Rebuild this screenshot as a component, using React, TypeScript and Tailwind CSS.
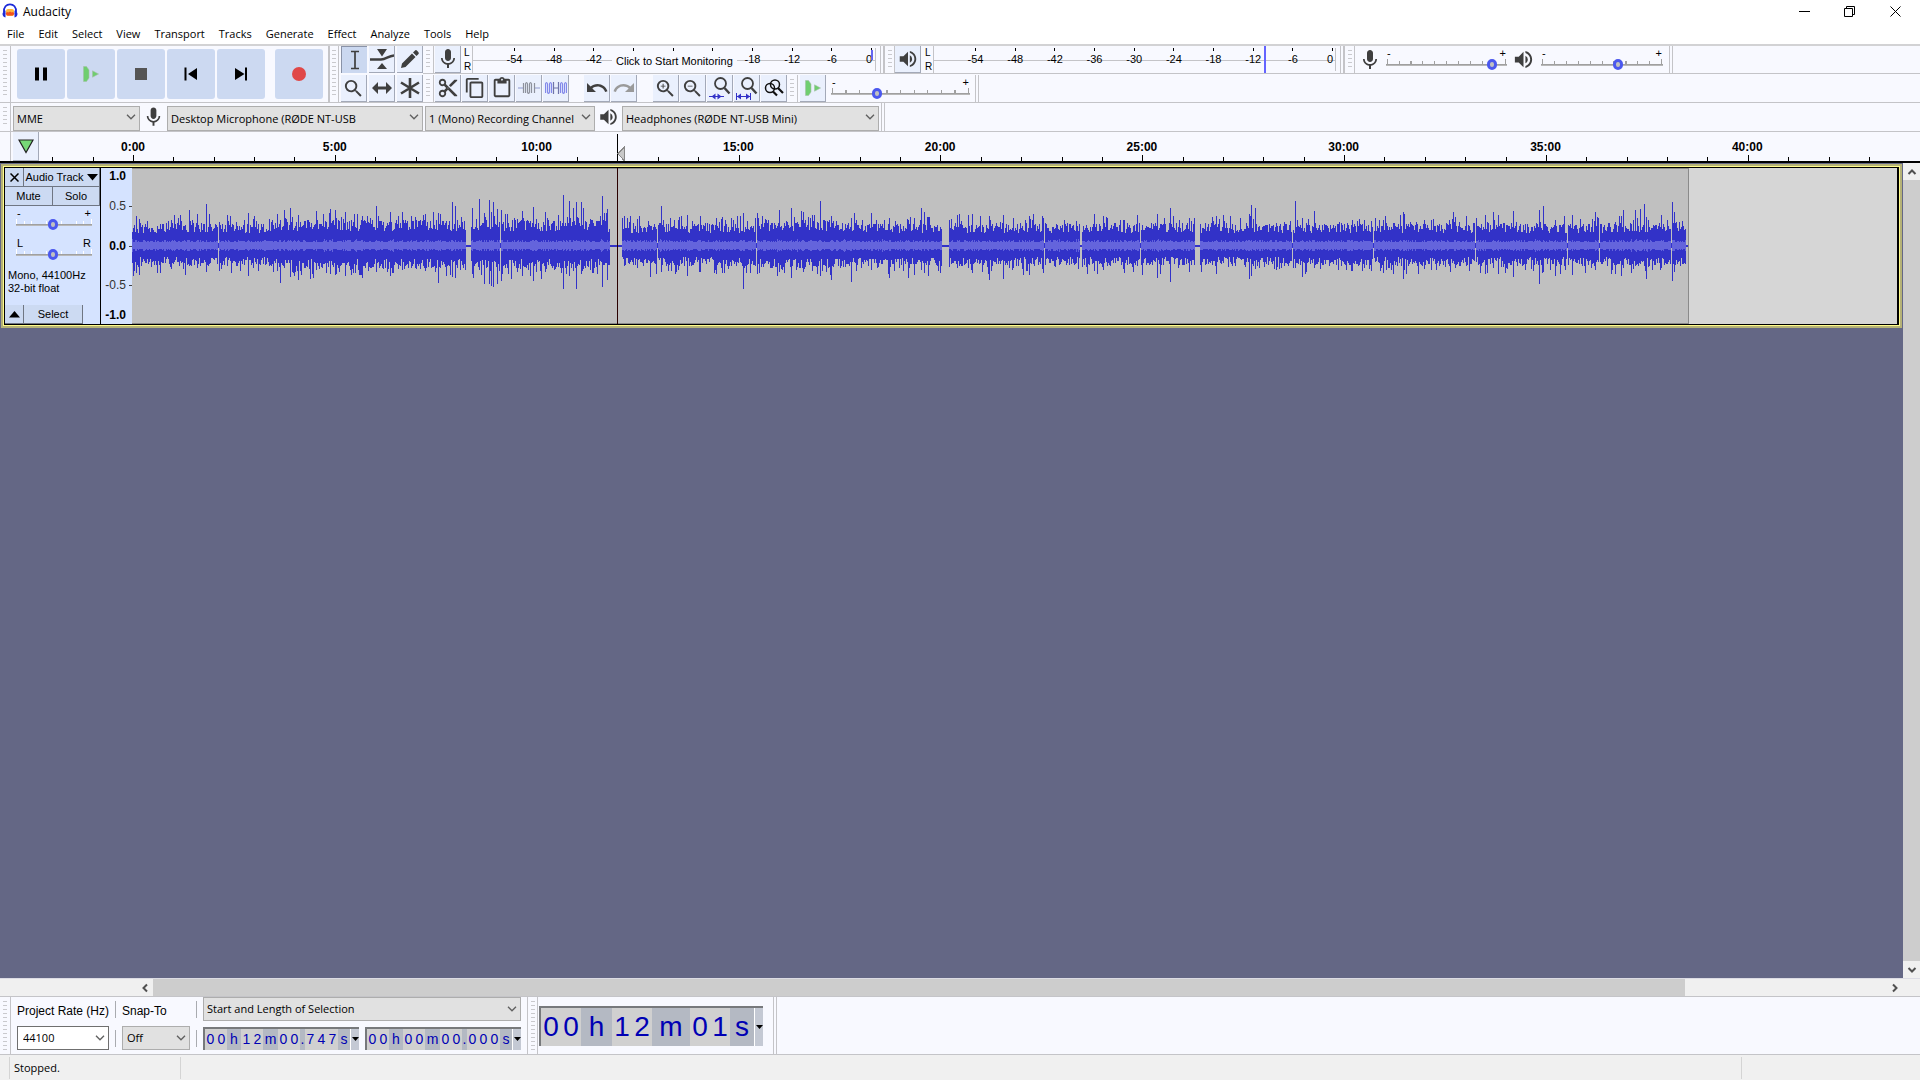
import { useState } from "react";
import type { ReactNode } from "react";
import { MdContentCopy, MdContentCut, MdContentPaste, MdMic, MdRedo, MdSearch, MdUndo, MdVolumeUp, MdZoomIn, MdZoomOut } from "react-icons/md";

const MENUS = ["File", "Edit", "Select", "View", "Transport", "Tracks", "Generate", "Effect", "Analyze", "Tools", "Help"];
const TIMES = ["0:00", "5:00", "10:00", "15:00", "20:00", "25:00", "30:00", "35:00", "40:00"];
const LEVELS = ["-54", "-48", "-42", "-36", "-30", "-24", "-18", "-12", "-6", "0"];
const MONITOR_HIDDEN = ["-36", "-30", "-24"];

// ---- Waveform ----

const CLIP_START = 132;
const CLIP_WIDTH = 1556;
const CENTRE = 77;
const SILENCES = [[466, 470], [610, 621], [942, 948], [1080, 1081], [1195, 1199], [1686, 1688]];
const NOTCHES = [218, 500, 657, 756, 1044, 1140, 1292, 1373, 1475, 1567, 1599, 1671];
// x, height above the centre line, height below it
const PEAKS = [
    [136, 30, 27], [174, 31, 16], [189, 36, 20], [197, 32, 22], [206, 42, 26], [219, 24, 25], [248, 33, 30], [280, 26, 37], [284, 36, 22], [290, 38, 31], [298, 31, 34], [316, 35, 24], [330, 37, 28],
    [345, 34, 30], [362, 30, 32], [376, 40, 26], [390, 34, 30], [402, 34, 24], [411, 30, 22], [425, 32, 25], [438, 33, 37], [452, 44, 31], [455, 40, 32], [472, 38, 28], [479, 47, 24], [484, 33, 38], [489, 46, 38], [491, 34, 40], [493, 44, 41], [497, 37, 38],
    [501, 36, 35], [507, 32, 22], [522, 35, 30], [533, 39, 35], [545, 34, 26], [563, 51, 43], [569, 45, 30], [573, 38, 25], [576, 44, 43], [581, 44, 28], [583, 38, 23], [602, 50, 41], [607, 37, 34],
    [624, 30, 20], [630, 30, 16], [637, 27, 22], [650, 20, 31], [661, 40, 26], [687, 31, 30], [700, 30, 26], [716, 28, 28], [743, 33, 43], [757, 33, 28], [779, 36, 26], [791, 38, 32], [803, 34, 26], [820, 45, 30], [831, 30, 34], [851, 28, 36], [871, 33, 24], [889, 28, 32],
    [908, 26, 32], [921, 38, 24], [924, 34, 27], [928, 29, 30], [957, 31, 22], [959, 32, 20], [972, 32, 27], [989, 30, 34], [1003, 31, 33], [1013, 28, 22], [1029, 30, 29], [1094, 32, 25], [1107, 28, 20], [1124, 26, 27], [1137, 31, 20], [1157, 32, 32], [1170, 38, 36], [1189, 28, 26],
    [1216, 30, 28], [1249, 32, 33], [1251, 41, 30], [1255, 38, 23], [1295, 45, 22], [1302, 28, 31], [1314, 35, 22], [1352, 26, 25], [1383, 26, 27], [1403, 34, 33], [1404, 32, 24], [1406, 22, 28], [1431, 26, 24], [1455, 29, 22], [1466, 30, 20], [1485, 31, 28], [1493, 34, 22], [1498, 31, 28],
    [1513, 35, 31], [1539, 36, 38], [1543, 40, 26], [1555, 26, 30], [1572, 31, 29], [1595, 34, 24], [1615, 24, 28], [1621, 30, 30], [1623, 36, 22], [1635, 36, 20], [1640, 37, 18], [1644, 42, 20], [1646, 29, 33], [1661, 31, 22], [1672, 44, 35], [1674, 34, 26],
];

function buildWave() {
    let seed = 7919;
    const rand = () => {
        seed = (seed * 16807) % 2147483647;
        return seed / 2147483647;
    };
    let peak = "";
    let rms = "";
    for (let i = 0; i < CLIP_WIDTH; i++) {
        const x = CLIP_START + i;
        const loud = (x > 270 && x < 608) || (x > 760 && x < 850) ? 1.15 : 1;
        let up = (13 + rand() * 10) * loud;
        let down = (11 + rand() * 9) * loud;
        if (rand() > 0.8) up += 3 + rand() * 8;
        if (rand() > 0.8) down += 3 + rand() * 8;
        let inner = 4 + Math.round(rand() * rand() * 3);
        const spike = PEAKS.find((p) => p[0] === x);
        if (spike) {
            up = spike[1];
            down = spike[2];
            inner = 6;
        }
        if (NOTCHES.includes(x)) {
            up = 3;
            down = 2;
            inner = 0;
        }
        if (SILENCES.some((s) => x >= s[0] && x <= s[1])) {
            up = 1;
            down = 1;
            inner = 0;
        }
        peak += `M${i} ${CENTRE - Math.round(up)}h1V${CENTRE + Math.round(down)}h-1z`;
        if (inner > 0) rms += `M${i} ${CENTRE - inner}h1V${CENTRE + inner - 1}h-1z`;
    }
    return { peak, rms };
}

const WAVE = buildWave();

// ---- Small pieces ----

function Grip({ className = "" }: { className?: string }) {
    return (
        <div className={`flex w-[11px] shrink-0 items-center justify-center self-stretch border-r border-[#c4c4c8] py-1 ${className}`}>
            <div className="h-full w-1 bg-[repeating-linear-gradient(to_bottom,#c9c9cd_0px,#c9c9cd_1px,transparent_1px,transparent_4px)]" />
        </div>
    );
}

function ToolButton({ label, pressed = false, className = "", children }: { label: string; pressed?: boolean; className?: string; children: ReactNode }) {
    const look = pressed ? "border-t border-l border-[#8a93a8] bg-[#cbd8f0]" : "border-r border-b border-[#a3a9b8] bg-[#eaf0fd]";
    return (
        <button aria-label={label} className={`flex h-[27px] w-[26px] shrink-0 items-center justify-center text-[#3f3f3f] ${look} ${className}`}>
            {children}
        </button>
    );
}

function Chevron({ className = "" }: { className?: string }) {
    return (
        <svg viewBox="0 0 10 6" className={`h-[6px] w-[10px] ${className}`} fill="none" stroke="#5f5f5f" strokeWidth="1.3">
            <path d="M1 .8 5 4.8 9 .8" />
        </svg>
    );
}

function Select({ label, value, className }: { label: string; value: string; className: string }) {
    return (
        <div className={`relative shrink-0 ${className}`}>
            <select aria-label={label} className="h-full w-full appearance-none border border-[#adadad] bg-[#e1e1e1] pr-4 pl-[3px] text-[11px] text-black outline-none">
                <option>{value}</option>
            </select>
            <Chevron className="pointer-events-none absolute top-[9px] right-1" />
        </div>
    );
}

function Slider({ label, start, low = "-", high = "+", className, white = false }: { label: string; start: number; low?: string; high?: string; className: string; white?: boolean }) {
    const [value, setValue] = useState(start);
    return (
        <div className={`shrink-0 ${className}`}>
            <div className="flex h-[9px] justify-between px-px font-['Liberation_Sans',sans-serif] text-[11px] leading-[9px] text-black">
                <span>{low}</span>
                <span>{high}</span>
            </div>
            <div className="grid h-[12px] items-center">
                <svg viewBox="0 0 100 12" preserveAspectRatio="none" className="col-start-1 row-start-1 h-[12px] w-full" shapeRendering="crispEdges">
                    {Array.from({ length: 11 }, (_, i) => (
                        <rect key={i} x={0.6 + i * 9.8} y={i % 10 === 0 ? 1 : 3} width="0.9" height={i % 10 === 0 ? 5 : 3} fill={white ? "#ffffff" : "#a0a0a0"} />
                    ))}
                    <rect y="6" width="100" height="1" fill="#a0a0a0" />
                    <rect y="7" width="100" height="1" fill="#b8b8b8" />
                </svg>
                <input
                    type="range"
                    aria-label={label}
                    min={0}
                    max={100}
                    value={value}
                    onChange={(e) => setValue(parseInt(e.target.value))}
                    className="col-start-1 row-start-1 m-0 h-[12px] w-full appearance-none bg-transparent [&::-webkit-slider-thumb]:h-[11px] [&::-webkit-slider-thumb]:w-[10px] [&::-webkit-slider-thumb]:appearance-none [&::-webkit-slider-thumb]:rounded-full [&::-webkit-slider-thumb]:border-[3px] [&::-webkit-slider-thumb]:border-[#4b58ee] [&::-webkit-slider-thumb]:bg-[#c0c0c0]"
                />
            </div>
        </div>
    );
}

function Meter({ className, mark, monitor = false }: { className: string; mark?: boolean; monitor?: boolean }) {
    return (
        <div className={`relative flex h-[27px] shrink-0 border-l border-[#c4c4c8] bg-[linear-gradient(#c4c4c8,#c4c4c8)] bg-[length:100%_1px] bg-[position:0_14px] bg-no-repeat pl-[41px] ${className}`}>
            <div className="flex w-[357px]">
                {LEVELS.map((level) => (
                    <div key={level} className={level === "0" ? "w-0" : "flex-1"}>
                        <div className={`flex w-px flex-col ${level === "0" ? "items-end" : "items-center"}`}>
                            <div className="mt-[2px] h-[3px] w-px bg-black" />
                            {!(monitor && MONITOR_HIDDEN.includes(level)) && (
                                <span className="mt-[2px] font-['Liberation_Sans',sans-serif] text-[11px] leading-3 text-black">{level}</span>
                            )}
                        </div>
                    </div>
                ))}
            </div>
            {monitor && (
                <div className="absolute top-[5px] left-[139px] bg-[#f8f9ff] px-1 py-[2px] font-['Liberation_Sans',sans-serif] text-[11px] leading-4 whitespace-nowrap text-black">Click to Start Monitoring</div>
            )}
            {monitor && <div className="absolute top-1 right-[3px] h-[10px] w-[2px] bg-[#6464f0]" />}
            {mark && <div className="absolute top-0 right-[70px] h-[27px] w-[2px] bg-[#6464ff]" />}
            <div className="absolute top-[2px] right-0 h-[23px] w-px bg-[#c4c4c8]" />
        </div>
    );
}

function Channels() {
    return (
        <div className="flex w-[9px] flex-col pl-px font-['Liberation_Sans',sans-serif] text-[10px] leading-[14px] text-black">
            <span>L</span>
            <span>R</span>
        </div>
    );
}

function RowEnd() {
    return <div className="w-[4px] shrink-0 self-stretch border-x border-[#c4c4c8]" />;
}

// Groups of digits are light, the units between them darker
function TimeField({ label, groups, big = false }: { label: string; groups: [string, string][]; big?: boolean }) {
    return (
        <div role="group" aria-label={label} className={`flex shrink-0 border-t-2 border-l-2 border-[#77797c] bg-[#b4b9c3] font-['Liberation_Sans',sans-serif] text-[#0000b4] ${big ? "h-[40px] w-[224px] text-[28px]" : "h-[23px] w-[156px] text-[14px]"}`}>
            {groups.map(([digits, unit], i) => (
                <div key={i} className="flex">
                    <div className="flex bg-[#d0d0d0]">
                        {digits.split("").map((digit, n) => (
                            <span key={n} className={`flex items-center justify-center ${big ? "w-[20px]" : "w-[11px]"}`}>{digit}</span>
                        ))}
                    </div>
                    <span className={`flex items-center justify-center ${unit === "." ? "w-[5px]" : unit === "s" ? (big ? "w-[24px]" : "w-[12px]") : unit === "h" ? (big ? "w-[31px]" : "w-[14px]") : big ? "w-[38px]" : "w-[15px]"}`}>{unit}</span>
                </div>
            ))}
            <button aria-label={`${label} format`} className="flex flex-1 items-center justify-center border-l border-white bg-[#c4c9d4]">
                <svg viewBox="0 0 7 4" className="h-1 w-[7px]"><path d="M0 0h7L3.500 4z" fill="#000" /></svg>
            </button>
        </div>
    );
}

// ---- Icons ----

function Logo() {
    return (
        <svg viewBox="0 0 16 16" className="h-4 w-4">
            <path d="M2 9C1.500 4 4.500 1.300 8 1.300S14.500 4 14 9" fill="none" stroke="#1c2ad8" strokeWidth="1.800" />
            <rect x="4" y="6" width="8" height="7" rx="2" fill="#ffb63c" />
            <path d="M3.500 10.500 5 9l1.500.5L8 8.500l1.500 1L11 9l1.500 1.500-1.500 2H5z" fill="#f4511e" />
            <path d="M3.500 7.500C1.500 8 .5 9.500.5 11s1 3 3 3.500zM12.500 7.500c2 .5 3 2 3 3.500s-1 3-3 3.500z" fill="#1c2ad8" />
        </svg>
    );
}

function PlayAtSpeed({ className = "" }: { className?: string }) {
    return (
        <svg viewBox="0 0 16 16" className={`h-4 w-4 ${className}`}>
            <path d="M.5.500h3L6 4v8l-2.500 3.500h-3z" fill="#6fce6f" stroke="#a5bfa8" strokeWidth=".6" />
            <path d="M9.500 4.800 15.500 8l-6 3.200z" fill="#6fce6f" stroke="#a5bfa8" strokeWidth=".6" />
        </svg>
    );
}

function BeamIcon() {
    return (
        <svg viewBox="0 0 20 20" className="h-5 w-5" stroke="#3f3f3f" strokeWidth="1.700" fill="none">
            <path d="M6 1.500h8M6 18.500h8M10 1.500v17" />
        </svg>
    );
}

function EnvelopeIcon() {
    return (
        <svg viewBox="0 0 24 22" className="h-[22px] w-6" fill="#3f3f3f">
            <path d="M7 1h10l-5 7.500zM7 21h10l-5-6z" />
            <path d="M0 11.500h11c5 0 7-3.500 13-4" fill="none" stroke="#3f3f3f" strokeWidth="2.400" />
        </svg>
    );
}

function PencilIcon() {
    return (
        <svg viewBox="0 0 20 20" className="h-5 w-5" fill="#3f3f3f">
            <path d="M1 19l1-4.500L12 4.500 15.500 8l-10 10zM13 3.500l1.800-1.800a1.600 1.600 0 0 1 2.300 0l1.200 1.200a1.600 1.600 0 0 1 0 2.300L16.500 7z" />
        </svg>
    );
}

function ShiftIcon() {
    return (
        <svg viewBox="0 0 22 14" className="h-[14px] w-[22px]" fill="#3f3f3f">
            <path d="M1 7l6-6v4.500h8V1l6 6-6 6V8.500H7V13z" />
        </svg>
    );
}

function StarIcon() {
    return (
        <svg viewBox="0 0 20 20" className="h-5 w-5" stroke="#3f3f3f" strokeWidth="2.600">
            <path d="M10 0v20M1 4.500l18 11M19 4.500l-18 11" />
        </svg>
    );
}

function TrimIcon({ silence = false }: { silence?: boolean }) {
    return silence ? (
        <svg viewBox="0 0 22 16" className="h-4 w-[22px]" fill="none" strokeWidth="1.200">
            <path d="M.5 13V4q1-3 2 0v8q1 3 2 0V4q1-3 2 0v9M15.500 13V4q1-3 2 0v8q1 3 2 0V4q1-3 2 0v9" stroke="#8288ea" />
            <path d="M8.500 8h5M8.500 2v12M13.500 2v12" stroke="#6f74a8" />
        </svg>
    ) : (
        <svg viewBox="0 0 22 16" className="h-4 w-[22px]" fill="none" strokeWidth="1.200">
            <path d="M0 8h5M17 8h5" stroke="#8f9ad0" />
            <path d="M5.500 3v10M16.500 3v10M7.500 13V4q1-3 2 0v8q1 3 2 0V4q1-3 2 0v9" stroke="#8d919c" />
        </svg>
    );
}

function FitIcon({ selection = false }: { selection?: boolean }) {
    return (
        <svg viewBox="0 0 24 24" className="h-6 w-6" fill="none">
            <circle cx="12.500" cy="7.500" r="5.500" stroke="#3f3f3f" strokeWidth="1.800" />
            <path d="M16.500 12 21.500 17.500" stroke="#3f3f3f" strokeWidth="2.400" />
            {selection ? (
                <>
                    <path d="M1 20.500h15" stroke="#3232c8" />
                    <path d="M7.500 17.500v6l-4-3zM9.500 17.500v6l4-3z" fill="#3232c8" />
                </>
            ) : (
                <>
                    <path d="M1.500 17v7M15.500 17v7M2 20.500h13" stroke="#3232c8" />
                    <path d="M6 17.500v6l-4-3zM11 17.500v6l4-3z" fill="#3232c8" />
                </>
            )}
        </svg>
    );
}

function ZoomToggleIcon() {
    return (
        <svg viewBox="0 0 20 20" className="h-5 w-5" fill="none" stroke="#111" strokeWidth="1.500">
            <circle cx="6" cy="10" r="4.500" />
            <circle cx="11" cy="6.500" r="4.500" />
            <path d="M9 13.500l4 4M14 10l5 5" strokeWidth="2.200" />
        </svg>
    );
}

const TRANSPORT = [
    { label: "Pause", icon: <path d="M2 1.500h4v13H2zM10 1.500h4v13h-4z" fill="#000" /> },
    { label: "Play", icon: null },
    { label: "Stop", icon: <rect x="2" y="2" width="12" height="12" fill="#555" /> },
    { label: "Skip to Start", icon: <path d="M1.500 1.500h2v13h-2zM14 2v12L5 8z" fill="#000" /> },
    { label: "Skip to End", icon: <path d="M12 1.500h2v13h-2zM2 2v12l9.500-6z" fill="#000" /> },
    { label: "Record", icon: <circle cx="8" cy="8" r="7" fill="#e04848" /> },
];

// ---- Sections ----

function TitleBar() {
    return (
        <header className="bg-white">
            <div className="flex h-[22px] items-center justify-between pl-[2px]">
                <div className="flex items-center gap-[5px]">
                    <Logo />
                    <h1 className="pt-[2px] text-xs">Audacity</h1>
                </div>
                <div className="flex text-black">
                    <button aria-label="Minimize" className="flex h-[22px] w-[45px] items-center justify-center">
                        <svg viewBox="0 0 11 11" className="h-[11px] w-[11px]" stroke="currentColor"><path d="M0 5.500h11" /></svg>
                    </button>
                    <button aria-label="Restore" className="flex h-[22px] w-[45px] items-center justify-center">
                        <svg viewBox="0 0 11 11" className="h-[11px] w-[11px]" fill="none" stroke="currentColor"><path d="M.5 2.500h8v8h-8zM2.500 2.500v-2h8v8h-2" /></svg>
                    </button>
                    <button aria-label="Close" className="flex h-[22px] w-[48px] items-center justify-center pr-[2px]">
                        <svg viewBox="0 0 11 11" className="h-[11px] w-[11px]" stroke="currentColor"><path d="M.5.500l10 10M10.500.500l-10 10" /></svg>
                    </button>
                </div>
            </div>
            <nav className="flex h-[22px] items-center pt-[2px]">
                {MENUS.map((menu) => (
                    <button key={menu} className="px-[7px] text-[11px] leading-4">{menu}</button>
                ))}
            </nav>
        </header>
    );
}

function Toolbars() {
    return (
        <div className="border-t-2 border-[#d2d2d4] bg-[#f8f9ff]">
            <div className="flex h-[56px]">
                <Grip />
                <div className="flex w-[317px] shrink-0 gap-[2px] pt-[3px] pl-[6px]">
                    {TRANSPORT.map((item) => (
                        <button key={item.label} aria-label={item.label} className={`flex h-[50px] w-[48px] items-center justify-center rounded-[3px] bg-[#ccd9f1] ${item.label === "Record" ? "ml-2" : ""}`}>
                            {item.icon ? <svg viewBox="0 0 16 16" className="h-4 w-4">{item.icon}</svg> : <PlayAtSpeed />}
                        </button>
                    ))}
                </div>
                <Grip className="border-l-2" />
                <div className="grid shrink-0 grid-cols-3 content-start gap-x-[2px] gap-y-[2px] pl-[2px]">
                    <ToolButton label="Selection Tool" pressed><BeamIcon /></ToolButton>
                    <ToolButton label="Envelope Tool"><EnvelopeIcon /></ToolButton>
                    <ToolButton label="Draw Tool"><PencilIcon /></ToolButton>
                    <ToolButton label="Zoom Tool"><MdSearch className="h-[23px] w-[23px]" /></ToolButton>
                    <ToolButton label="Time Shift Tool"><ShiftIcon /></ToolButton>
                    <ToolButton label="Multi Tool"><StarIcon /></ToolButton>
                </div>
                <div className="flex min-w-0 flex-1 flex-col">
                    <div className="flex h-[28px] border-b border-[#c4c4c8]">
                        <Grip />
                        <ToolButton label="Record Meter" className="ml-px"><MdMic className="h-6 w-6" /></ToolButton>
                        <div className="w-[2px]" />
                        <Channels />
                        <Meter className="w-[404px]" monitor />
                        <div className="w-1" />
                        <RowEnd />
                        <Grip className="border-l" />
                        <ToolButton label="Playback Meter"><MdVolumeUp className="h-[22px] w-[22px]" /></ToolButton>
                        <div className="w-[3px]" />
                        <Channels />
                        <Meter className="w-[403px]" mark />
                        <div className="w-1" />
                        <RowEnd />
                        <Grip className="border-l" />
                        <MdMic className="ml-[3px] h-6 w-6 shrink-0 self-center text-[#3f3f3f]" />
                        <Slider label="Recording Volume" start={91} className="mt-[3px] ml-1 w-[121px]" />
                        <MdVolumeUp className="mr-[6px] ml-[5px] h-[23px] w-[23px] shrink-0 self-center text-[#3f3f3f]" />
                        <Slider label="Playback Volume" start={64} className="mt-[3px] w-[122px]" />
                        <div className="w-[6px]" />
                        <RowEnd />
                    </div>
                    <div className="flex h-[28px] items-start pt-px">
                        <Grip />
                        <div className="flex gap-px pl-px">
                            <ToolButton label="Cut"><MdContentCut className="h-[22px] w-[22px]" /></ToolButton>
                            <ToolButton label="Copy"><MdContentCopy className="h-[22px] w-[22px]" /></ToolButton>
                            <ToolButton label="Paste"><MdContentPaste className="h-[22px] w-[22px]" /></ToolButton>
                            <ToolButton label="Trim"><TrimIcon /></ToolButton>
                            <ToolButton label="Silence"><TrimIcon silence /></ToolButton>
                        </div>
                        <div className="flex gap-px pl-[15px]">
                            <ToolButton label="Undo"><MdUndo className="h-6 w-6" /></ToolButton>
                            <ToolButton label="Redo"><MdRedo className="h-6 w-6 text-[#9a9a9a]" /></ToolButton>
                        </div>
                        <div className="flex gap-px pl-[16px]">
                            <ToolButton label="Zoom In"><MdZoomIn className="h-[23px] w-[23px]" /></ToolButton>
                            <ToolButton label="Zoom Out"><MdZoomOut className="h-[23px] w-[23px]" /></ToolButton>
                            <ToolButton label="Fit Selection"><FitIcon selection /></ToolButton>
                            <ToolButton label="Fit Project"><FitIcon /></ToolButton>
                            <ToolButton label="Zoom Toggle"><ZoomToggleIcon /></ToolButton>
                        </div>
                        <Grip />
                        <ToolButton label="Play at Speed" className="ml-[2px]"><PlayAtSpeed /></ToolButton>
                        <Slider label="Playback Speed" start={32} className="mt-[3px] ml-[5px] w-[139px]" />
                        <div className="w-[5px]" />
                        <RowEnd />
                    </div>
                </div>
            </div>
            <div className="flex h-[30px] items-center border-y border-[#c4c4c8]">
                <Grip />
                <Select label="Audio Host" value="MME" className="ml-[2px] h-[25px] w-[127px]" />
                <MdMic className="mx-[2px] h-6 w-[23px] text-[#3f3f3f]" />
                <Select label="Recording Device" value="Desktop Microphone (RØDE NT-USB" className="h-[25px] w-[256px]" />
                <Select label="Recording Channels" value="1 (Mono) Recording Channel" className="ml-[2px] h-[25px] w-[170px]" />
                <MdVolumeUp className="mx-[2px] h-[22px] w-[23px] text-[#3f3f3f]" />
                <Select label="Playback Device" value="Headphones (RØDE NT-USB Mini)" className="h-[25px] w-[257px]" />
                <div className="w-[2px]" />
                <RowEnd />
            </div>
        </div>
    );
}

function Ruler() {
    return (
        <div className="flex h-[31px] border-b-2 border-black bg-[#f8f9ff]">
            <div className="w-[11px] border-r border-[#c4c4c8]" />
            <button aria-label="Pinned Play Head" className="ml-[2px] flex w-[26px] items-center justify-center border-r border-b border-[#a3a9b8] bg-[#eaf0fd]">
                <svg viewBox="0 0 16 15" className="h-[15px] w-4"><path d="M1 1h14L8 13.500z" fill="#77d877" stroke="#222" strokeWidth="1.200" /></svg>
            </button>
            <div className="relative flex flex-1 overflow-hidden pl-[94px] font-['Liberation_Sans',sans-serif]">
                <svg className="absolute inset-0 h-full w-full" shapeRendering="crispEdges">
                    {Array.from({ length: 46 }, (_, i) => (
                        <rect key={i} x={Math.round(94 + (i - 2) * 40.37)} y={(i - 2) % 5 === 0 ? 23 : 25} width="1" height="6" fill="#000" />
                    ))}
                    <rect x="578" y="2" width="1" height="27" fill="#000" />
                    <path d="M579 21.500l6-6v13z" fill="#c8c8c8" stroke="#888" />
                </svg>
                <div className="flex w-[1816px] shrink-0">
                    {TIMES.map((time) => (
                        <div key={time} className="flex-1">
                            <div className="flex w-0 justify-center pt-[7px] text-xs leading-4 font-bold text-black">{time}</div>
                        </div>
                    ))}
                </div>
            </div>
        </div>
    );
}

function TrackPanel() {
    const button = "flex items-center justify-center border-r border-b border-[#6f7683] bg-[#ccdaf2]";
    return (
        <div className="flex w-[96px] shrink-0 flex-col border-r border-black bg-[#d5e3ff] text-[11px] leading-[13px] text-black">
            <div className="flex h-[19px]">
                <button aria-label="Close track" className={`w-[19px] ${button}`}>
                    <svg viewBox="0 0 9 9" className="h-[9px] w-[9px]" stroke="#000" strokeWidth="1.500"><path d="M.5.500l8 8M8.500.500l-8 8" /></svg>
                </button>
                <button className={`flex-1 gap-[3px] ${button}`}>
                    Audio Track
                    <svg viewBox="0 0 11 7" className="h-[7px] w-[11px]"><path d="M0 0h11L5.500 6.500z" fill="#000" /></svg>
                </button>
            </div>
            <div className="flex h-[19px]">
                <button className={`w-[48px] ${button}`}>Mute</button>
                <button className={`flex-1 ${button}`}>Solo</button>
            </div>
            <Slider label="Gain" start={48} className="mt-[3px] ml-[11px] w-[76px]" white />
            <Slider label="Pan" start={48} low="L" high="R" className="mt-[9px] ml-[11px] w-[76px]" white />
            <p className="mt-[9px] pl-[3px]">
                Mono, 44100Hz
                <br />
                32-bit float
            </p>
            <div className="mt-auto flex h-[19px]">
                <button aria-label="Collapse track" className={`w-[19px] ${button}`}>
                    <svg viewBox="0 0 11 7" className="h-[7px] w-[11px]"><path d="M0 6.500h11L5.500 0z" fill="#000" /></svg>
                </button>
                <button className={`w-[59px] ${button}`}>Select</button>
            </div>
        </div>
    );
}

function AmplitudeRuler() {
    const tick = <span className="h-px w-[3px] bg-[#444]" />;
    return (
        <div className="flex w-[31px] shrink-0 flex-col justify-between bg-[#d5e3ff] text-xs leading-4 text-black">
            <div className="flex justify-end pr-[6px] font-bold">1.0</div>
            <div className="flex items-center justify-end gap-[3px] text-[#333]">0.5{tick}</div>
            <div className="flex items-center justify-end gap-[3px] pt-[10px] font-bold">0.0{tick}</div>
            <div className="flex items-center justify-end gap-[3px] pt-[9px] text-[#333]">-0.5{tick}</div>
            <div className="flex justify-end pr-[6px] pb-px font-bold">-1.0</div>
        </div>
    );
}

function Track() {
    return (
        <div className="mt-px ml-px border-2 border-[#b5b276] font-['Liberation_Sans',sans-serif]">
            <div className="border border-[#fffb8a]">
                <div className="flex h-[158px] border border-r-2 border-black">
                    <TrackPanel />
                    <AmplitudeRuler />
                    <div className="relative flex min-w-0 flex-1 bg-[#d6d6d6]">
                        <div className="w-[1557px] shrink-0 overflow-hidden border-y border-r border-[#8a8a8a] bg-[#c0c0c0]">
                            <svg viewBox={`0 0 ${CLIP_WIDTH} 154`} className="h-[154px] w-[1556px]" shapeRendering="crispEdges">
                                <path d={WAVE.peak} fill="#3232c8" />
                                <path d={WAVE.rms} fill="#6464dc" />
                            </svg>
                        </div>
                        <div className="absolute top-0 left-[485px] h-full w-px bg-[#2a0000]" />
                    </div>
                </div>
            </div>
        </div>
    );
}

function Arrow({ label, className, path }: { label: string; className: string; path: string }) {
    return (
        <button aria-label={label} className={`flex shrink-0 items-center justify-center ${className}`}>
            <svg viewBox="0 0 10 10" className="h-[10px] w-[10px]" fill="none" stroke="#505050" strokeWidth="2"><path d={path} /></svg>
        </button>
    );
}

function SelectionBar() {
    const divider = <div className="h-[17px] w-px bg-[#a9abb0]" />;
    return (
        <div className="flex h-[59px] border-y border-[#c4c4c8] bg-[#f8f9ff] font-['Liberation_Sans',sans-serif] text-xs text-black">
            <Grip />
            <div className="grid grid-cols-[98px_7px_74px_7px_auto] content-start items-center gap-y-[5px] pl-[6px]">
                <label htmlFor="rate" className="pt-1">Project Rate (Hz)</label>
                {divider}
                <label htmlFor="snap" className="pt-1">Snap-To</label>
                {divider}
                <Select label="Selection Mode" value="Start and Length of Selection" className="h-[24px] w-[318px] font-['Open_Sans',sans-serif]" />
                <div className="relative h-[24px] w-[92px]">
                    <input id="rate" defaultValue="44100" className="h-full w-full border border-[#6f6f6f] bg-white pb-px pl-[5px] font-['Open_Sans',sans-serif] text-[11px] outline-none" />
                    <Chevron className="pointer-events-none absolute top-[9px] right-1" />
                </div>
                {divider}
                <div className="relative h-[24px] w-[68px]">
                    <select id="snap" className="h-full w-full appearance-none border border-[#adadad] bg-[#e1e1e1] pl-[4px] font-['Open_Sans',sans-serif] text-[11px] outline-none">
                        <option>Off</option>
                    </select>
                    <Chevron className="pointer-events-none absolute top-[9px] right-1" />
                </div>
                {divider}
                <div className="flex gap-[6px]">
                    <TimeField label="Selection start" groups={[["00", "h"], ["12", "m"], ["00", "."], ["747", "s"]]} />
                    <TimeField label="Selection length" groups={[["00", "h"], ["00", "m"], ["00", "."], ["000", "s"]]} />
                </div>
            </div>
            <div className="w-[6px]" />
            <Grip className="border-l" />
            <div className="flex items-center pl-px">
                <TimeField label="Audio position" groups={[["00", "h"], ["12", "m"], ["01", "s"]]} big />
            </div>
            <div className="w-[10px]" />
            <RowEnd />
        </div>
    );
}

export default function App() {
    return (
        <div className="flex h-screen flex-col overflow-hidden bg-[#f0f0f0] font-['Open_Sans',sans-serif] text-black">
            <TitleBar />
            <Toolbars />
            <Ruler />
            <main className="flex min-h-0 flex-1 bg-[#646785]">
                <div className="min-w-0 flex-1">
                    <Track />
                </div>
                <div className="ml-px flex w-[17px] shrink-0 flex-col bg-[#f0f0f0]">
                    <Arrow label="Scroll up" className="h-[17px]" path="M1.500 7 5 3.500 8.500 7" />
                    <div className="flex-1 bg-[#cdcdcd]" />
                    <Arrow label="Scroll down" className="h-[17px]" path="M1.500 3 5 6.500 8.500 3" />
                </div>
            </main>
            <div className="flex h-[18px] border-t border-[#dcdce4] pl-[136px]">
                <Arrow label="Scroll left" className="w-[17px]" path="M7 1.500 3.500 5 7 8.500" />
                <div className="w-[1532px] bg-[#cdcdcd]" />
                <div className="flex-1" />
                <Arrow label="Scroll right" className="w-[17px]" path="M3 1.500 6.500 5 3 8.500" />
                <div className="w-[17px]" />
            </div>
            <SelectionBar />
            <footer className="flex h-[25px] items-center text-[11px]">
                <div className="h-[22px] w-[10px] border-r border-[#d4d4d4]" />
                <div className="flex h-[22px] w-[171px] items-center border-r border-[#d4d4d4] pt-[2px] pl-1">Stopped.</div>
                <div className="h-[22px] flex-1" />
                <div className="h-[22px] w-[179px] border-l border-[#d4d4d4]" />
            </footer>
        </div>
    );
}
